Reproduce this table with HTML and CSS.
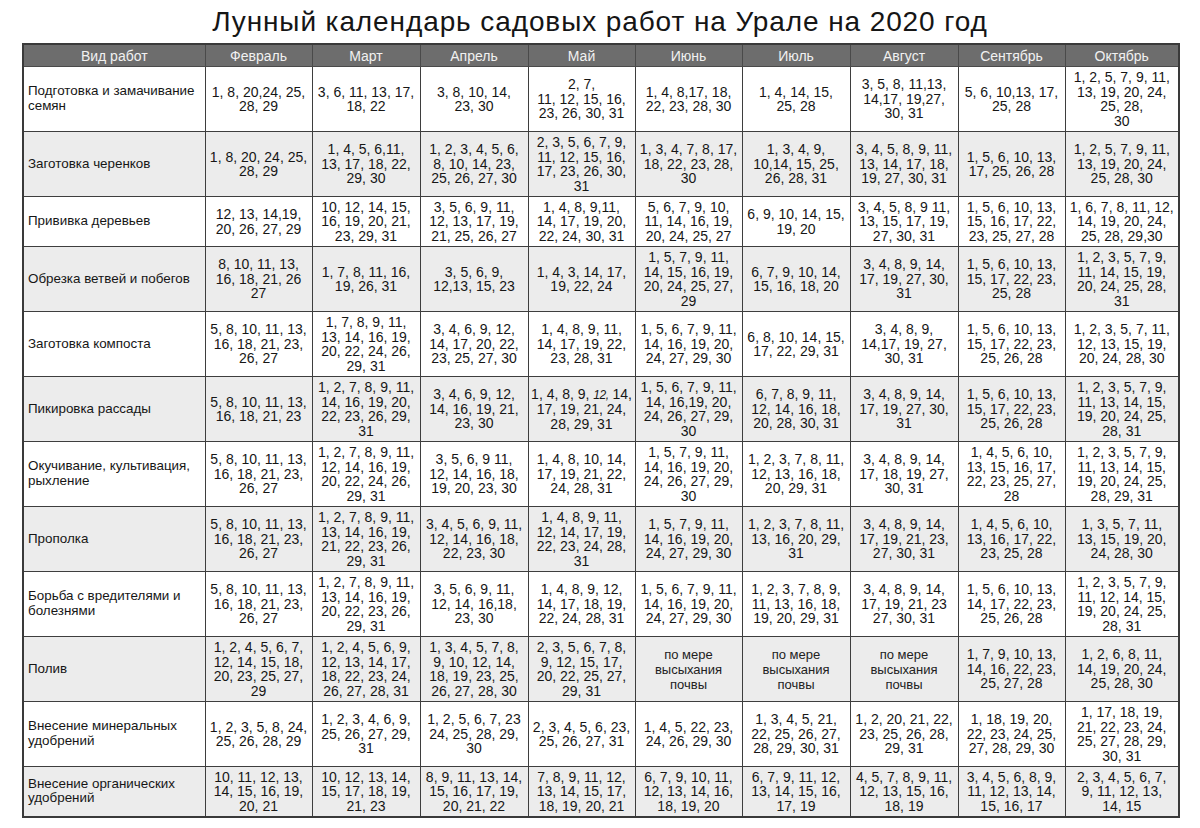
FILE: index.html
```html
<!DOCTYPE html>
<html lang="ru">
<head>
<meta charset="utf-8">
<title>Лунный календарь садовых работ на Урале на 2020 год</title>
<link rel="stylesheet" href="styles.css">
</head>
<body>
<div class="page">
<h1 class="title">Лунный календарь садовых работ на Урале на 2020 год</h1>
<table class="grid">
<colgroup>
<col class="c-label"><col class="c-m107"><col class="c-m108"><col class="c-m108"><col class="c-m107"><col class="c-m107"><col class="c-m108"><col class="c-m108"><col class="c-m107"><col class="c-m114">
</colgroup>
<thead>
<tr class="head"><th>Вид работ</th><th>Февраль</th><th>Март</th><th>Апрель</th><th>Май</th><th>Июнь</th><th>Июль</th><th>Август</th><th>Сентябрь</th><th>Октябрь</th></tr>
</thead>
<tbody>
<tr class="r-tall odd">
<td class="lab">Подготовка и замачивание<br>семян</td>
<td>1, 8, 20,24, 25,<br>28, 29</td>
<td>3, 6, 11, 13, 17,<br>18, 22</td>
<td>3, 8, 10, 14,<br>23, 30</td>
<td>2, 7,<br>11, 12, 15, 16,<br>23, 26, 30, 31</td>
<td>1, 4, 8,17, 18,<br>22, 23, 28, 30</td>
<td>1, 4, 14, 15,<br>25, 28</td>
<td>3, 5, 8, 11,13,<br>14,17, 19,27,<br>30, 31</td>
<td>5, 6, 10,13, 17,<br>25, 28</td>
<td>1, 2, 5, 7, 9, 11,<br>13, 19, 20, 24,<br>25, 28,<br>30</td>
</tr>
<tr class="r-tall even">
<td class="lab">Заготовка черенков</td>
<td>1, 8, 20, 24, 25,<br>28, 29</td>
<td>1, 4, 5, 6,11,<br>13, 17, 18, 22,<br>29, 30</td>
<td>1, 2, 3, 4, 5, 6,<br>8, 10, 14, 23,<br>25, 26, 27, 30</td>
<td>2, 3, 5, 6, 7, 9,<br>11, 12, 15, 16,<br>17, 23, 26, 30,<br>31</td>
<td>1, 3, 4, 7, 8, 17,<br>18, 22, 23, 28,<br>30</td>
<td>1, 3, 4, 9,<br>10,14, 15, 25,<br>26, 28, 31</td>
<td>3, 4, 5, 8, 9, 11,<br>13, 14, 17, 18,<br>19, 27, 30, 31</td>
<td>1, 5, 6, 10, 13,<br>17, 25, 26, 28</td>
<td>1, 2, 5, 7, 9, 11,<br>13, 19, 20, 24,<br>25, 28, 30</td>
</tr>
<tr class="r-short odd">
<td class="lab">Прививка деревьев</td>
<td>12, 13, 14,19,<br>20, 26, 27, 29</td>
<td>10, 12, 14, 15,<br>16, 19, 20, 21,<br>23, 29, 31</td>
<td>3, 5, 6, 9, 11,<br>12, 13, 17, 19,<br>21, 25, 26, 27</td>
<td>1, 4, 8, 9,11,<br>14, 17, 19, 20,<br>22, 24, 30, 31</td>
<td>5, 6, 7, 9, 10,<br>11, 14, 16, 19,<br>20, 24, 25, 27</td>
<td>6, 9, 10, 14, 15,<br>19, 20</td>
<td>3, 4, 5, 8, 9 11,<br>13, 15, 17, 19,<br>27, 30, 31</td>
<td>1, 5, 6, 10, 13,<br>15, 16, 17, 22,<br>23, 25, 27, 28</td>
<td>1, 6, 7, 8, 11, 12,<br>14, 19, 20, 24,<br>25, 28, 29,30</td>
</tr>
<tr class="r-tall even">
<td class="lab">Обрезка ветвей и побегов</td>
<td>8, 10, 11, 13,<br>16, 18, 21, 26<br>27</td>
<td>1, 7, 8, 11, 16,<br>19, 26, 31</td>
<td>3, 5, 6, 9,<br>12,13, 15, 23</td>
<td>1, 4, 3, 14, 17,<br>19, 22, 24</td>
<td>1, 5, 7, 9, 11,<br>14, 15, 16, 19,<br>20, 24, 25, 27,<br>29</td>
<td>6, 7, 9, 10, 14,<br>15, 16, 18, 20</td>
<td>3, 4, 8, 9, 14,<br>17, 19, 27, 30,<br>31</td>
<td>1, 5, 6, 10, 13,<br>15, 17, 22, 23,<br>25, 28</td>
<td>1, 2, 3, 5, 7, 9,<br>11, 14, 15, 19,<br>20, 24, 25, 28,<br>31</td>
</tr>
<tr class="r-tall odd">
<td class="lab">Заготовка компоста</td>
<td>5, 8, 10, 11, 13,<br>16, 18, 21, 23,<br>26, 27</td>
<td>1, 7, 8, 9, 11,<br>13, 14, 16, 19,<br>20, 22, 24, 26,<br>29, 31</td>
<td>3, 4, 6, 9, 12,<br>14, 17, 20, 22,<br>23, 25, 27, 30</td>
<td>1, 4, 8, 9, 11,<br>14, 17, 19, 22,<br>23, 28, 31</td>
<td>1, 5, 6, 7, 9, 11,<br>14, 16, 19, 20,<br>24, 27, 29, 30</td>
<td>6, 8, 10, 14, 15,<br>17, 22, 29, 31</td>
<td>3, 4, 8, 9,<br>14,17, 19, 27,<br>30, 31</td>
<td>1, 5, 6, 10, 13,<br>15, 17, 22, 23,<br>25, 26, 28</td>
<td>1, 2, 3, 5, 7, 11,<br>12, 13, 15, 19,<br>20, 24, 28, 30</td>
</tr>
<tr class="r-tall even">
<td class="lab">Пикировка рассады</td>
<td>5, 8, 10, 11, 13,<br>16, 18, 21, 23</td>
<td>1, 2, 7, 8, 9, 11,<br>14, 16, 19, 20,<br>22, 23, 26, 29,<br>31</td>
<td>3, 4, 6, 9, 12,<br>14, 16, 19, 21,<br>23, 30</td>
<td>1, 4, 8, 9, <i class="it">12,</i> 14,<br>17, 19, 21, 24,<br>28, 29, 31</td>
<td>1, 5, 6, 7, 9, 11,<br>14, 16,19, 20,<br>24, 26, 27, 29,<br>30</td>
<td>6, 7, 8, 9, 11,<br>12, 14, 16, 18,<br>20, 28, 30, 31</td>
<td>3, 4, 8, 9, 14,<br>17, 19, 27, 30,<br>31</td>
<td>1, 5, 6, 10, 13,<br>15, 17, 22, 23,<br>25, 26, 28</td>
<td>1, 2, 3, 5, 7, 9,<br>11, 13, 14, 15,<br>19, 20, 24, 25,<br>28, 31</td>
</tr>
<tr class="r-tall odd">
<td class="lab">Окучивание, культивация,<br>рыхление</td>
<td>5, 8, 10, 11, 13,<br>16, 18, 21, 23,<br>26, 27</td>
<td>1, 2, 7, 8, 9, 11,<br>12, 14, 16, 19,<br>20, 22, 24, 26,<br>29, 31</td>
<td>3, 5, 6, 9 11,<br>12, 14, 16, 18,<br>19, 20, 23, 30</td>
<td>1, 4, 8, 10, 14,<br>17, 19, 21, 22,<br>24, 28, 31</td>
<td>1, 5, 7, 9, 11,<br>14, 16, 19, 20,<br>24, 26, 27, 29,<br>30</td>
<td>1, 2, 3, 7, 8, 11,<br>12, 13, 16, 18,<br>20, 29, 31</td>
<td>3, 4, 8, 9, 14,<br>17, 18, 19, 27,<br>30, 31</td>
<td>1, 4, 5, 6, 10,<br>13, 15, 16, 17,<br>22, 23, 25, 27,<br>28</td>
<td>1, 2, 3, 5, 7, 9,<br>11, 13, 14, 15,<br>19, 20, 24, 25,<br>28, 29, 31</td>
</tr>
<tr class="r-tall even">
<td class="lab">Прополка</td>
<td>5, 8, 10, 11, 13,<br>16, 18, 21, 23,<br>26, 27</td>
<td>1, 2, 7, 8, 9, 11,<br>13, 14, 16, 19,<br>21, 22, 23, 26,<br>29, 31</td>
<td>3, 4, 5, 6, 9, 11,<br>12, 14, 16, 18,<br>22, 23, 30</td>
<td>1, 4, 8, 9, 11,<br>12, 14, 17, 19,<br>22, 23, 24, 28,<br>31</td>
<td>1, 5, 7, 9, 11,<br>14, 16, 19, 20,<br>24, 27, 29, 30</td>
<td>1, 2, 3, 7, 8, 11,<br>13, 16, 20, 29,<br>31</td>
<td>3, 4, 8, 9, 14,<br>17, 19, 21, 23,<br>27, 30, 31</td>
<td>1, 4, 5, 6, 10,<br>13, 16, 17, 22,<br>23, 25, 28</td>
<td>1, 3, 5, 7, 11,<br>13, 15, 19, 20,<br>24, 28, 30</td>
</tr>
<tr class="r-tall odd">
<td class="lab">Борьба с вредителями и<br>болезнями</td>
<td>5, 8, 10, 11, 13,<br>16, 18, 21, 23,<br>26, 27</td>
<td>1, 2, 7, 8, 9, 11,<br>13, 14, 16, 19,<br>20, 22, 23, 26,<br>29, 31</td>
<td>3, 5, 6, 9, 11,<br>12, 14, 16,18,<br>23, 30</td>
<td>1, 4, 8, 9, 12,<br>14, 17, 18, 19,<br>22, 24, 28, 31</td>
<td>1, 5, 6, 7, 9, 11,<br>14, 16, 19, 20,<br>24, 27, 29, 30</td>
<td>1, 2, 3, 7, 8, 9,<br>11, 13, 16, 18,<br>19, 20, 29, 31</td>
<td>3, 4, 8, 9, 14,<br>17, 19, 21, 23<br>27, 30, 31</td>
<td>1, 5, 6, 10, 13,<br>14, 17, 22, 23,<br>25, 26, 28</td>
<td>1, 2, 3, 5, 7, 9,<br>11, 12, 14, 15,<br>19, 20, 24, 25,<br>28, 31</td>
</tr>
<tr class="r-tall even">
<td class="lab">Полив</td>
<td>1, 2, 4, 5, 6, 7,<br>12, 14, 15, 18,<br>20, 23, 25, 27,<br>29</td>
<td>1, 2, 4, 5, 6, 9,<br>12, 13, 14, 17,<br>18, 22, 23, 24,<br>26, 27, 28, 31</td>
<td>1, 3, 4, 5, 7, 8,<br>9, 10, 12, 14,<br>18, 19, 23, 25,<br>26, 27, 28, 30</td>
<td>2, 3, 5, 6, 7, 8,<br>9, 12, 15, 17,<br>20, 22, 25, 27,<br>29, 31</td>
<td class="note">по мере<br>высыхания<br>почвы</td>
<td class="note">по мере<br>высыхания<br>почвы</td>
<td class="note">по мере<br>высыхания<br>почвы</td>
<td>1, 7, 9, 10, 13,<br>14, 16, 22, 23,<br>25, 27, 28</td>
<td>1, 2, 6, 8, 11,<br>14, 19, 20, 24,<br>25, 28, 30</td>
</tr>
<tr class="r-tall odd">
<td class="lab">Внесение минеральных<br>удобрений</td>
<td>1, 2, 3, 5, 8, 24,<br>25, 26, 28, 29</td>
<td>1, 2, 3, 4, 6, 9,<br>25, 26, 27, 29,<br>31</td>
<td>1, 2, 5, 6, 7, 23<br>24, 25, 28, 29,<br>30</td>
<td>2, 3, 4, 5, 6, 23,<br>25, 26, 27, 31</td>
<td>1, 4, 5, 22, 23,<br>24, 26, 29, 30</td>
<td>1, 3, 4, 5, 21,<br>22, 25, 26, 27,<br>28, 29, 30, 31</td>
<td>1, 2, 20, 21, 22,<br>23, 25, 26, 28,<br>29, 31</td>
<td>1, 18, 19, 20,<br>22, 23, 24, 25,<br>27, 28, 29, 30</td>
<td>1, 17, 18, 19,<br>21, 22, 23, 24,<br>25, 27, 28, 29,<br>30, 31</td>
</tr>
<tr class="r-short even last">
<td class="lab">Внесение органических<br>удобрений</td>
<td>10, 11, 12, 13,<br>14, 15, 16, 19,<br>20, 21</td>
<td>10, 12, 13, 14,<br>15, 17, 18, 19,<br>21, 23</td>
<td>8, 9, 11, 13, 14,<br>15, 16, 17, 19,<br>20, 21, 22</td>
<td>7, 8, 9, 11, 12,<br>13, 14, 15, 17,<br>18, 19, 20, 21</td>
<td>6, 7, 9, 10, 11,<br>12, 13, 14, 16,<br>18, 19, 20</td>
<td>6, 7, 9, 11, 12,<br>13, 14, 15, 16,<br>17, 19</td>
<td>4, 5, 7, 8, 9, 11,<br>12, 13, 15, 16,<br>18, 19</td>
<td>3, 4, 5, 6, 8, 9,<br>11, 12, 13, 14,<br>15, 16, 17</td>
<td>2, 3, 4, 5, 6, 7,<br>9, 11, 12, 13,<br>14, 15</td>
</tr>
</tbody>
</table>
</div>
</body>
</html>
```
FILE: styles.css
```css
html, body {
  margin: 0;
  padding: 0;
  background: #ffffff;
}

body {
  font-family: "Liberation Sans", Arial, Helvetica, sans-serif;
  color: #161616;
}

.page {
  width: 1200px;
}

.title {
  margin: 0;
  height: 43px;
  font-size: 28px;
  letter-spacing: 0.9px;
  font-weight: normal;
  line-height: 43px;
  text-align: center;
  color: #151515;
}

.grid {
  margin-left: 22px;
  width: 1156px;
  table-layout: fixed;
  border-collapse: collapse;
  border: 2px solid #3a3a3a;
}

.c-label { width: 182px; }
.c-m107 { width: 107px; }
.c-m108 { width: 108px; }
.c-m114 { width: 114px; }

.head th {
  height: 21px;
  padding: 0;
  background: #6d6d6d;
  color: #f1f1f1;
  font-size: 14px;
  font-weight: normal;
  line-height: 16px;
  text-align: center;
  border: 1px solid #4a4a4a;
}

.grid td {
  padding: 0;
  border: 1px solid #3e3e3e;
  font-size: 14px;
  line-height: 14.5px;
  text-align: center;
  vertical-align: middle;
  white-space: nowrap;
  color: #161616;
}

.grid td.lab {
  text-align: left;
  padding-left: 4px;
  font-size: 13.4px;
  line-height: 14.7px;
}

.grid td.note {
  font-size: 13px;
  line-height: 15px;
  color: #222;
}

.r-tall { height: 65px; }
.r-short { height: 50px; }

.odd td { background: #ffffff; }
.even td { background: #ececec; }

.it {
  font-style: italic;
  font-size: 12px;
  letter-spacing: -0.5px;
}
```
